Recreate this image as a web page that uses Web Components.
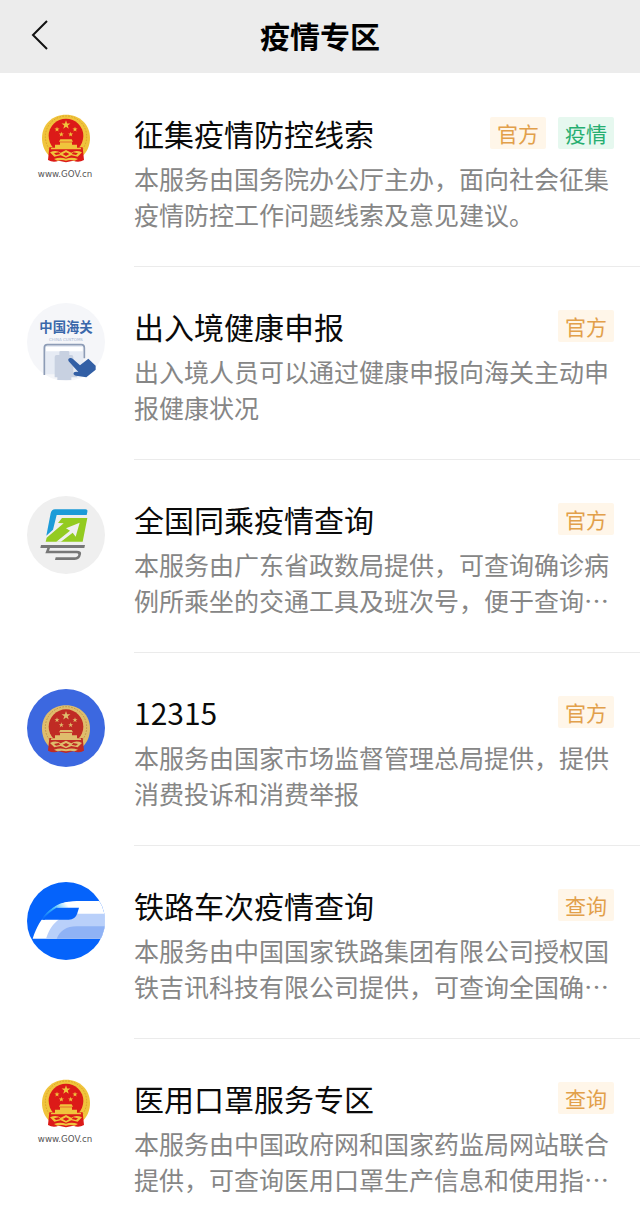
<!DOCTYPE html>
<html lang="zh-CN">
<head>
<meta charset="utf-8">
<meta name="viewport" content="width=device-width, initial-scale=1">
<title>疫情专区</title>
<style>
  :root {
    --main-font: "Noto Sans CJK SC", sans-serif;
    --bar-color: #ececec;
    --line-color: #ebebeb;
    --title-color: #0a0a0a;
    --desc-color: #868686;
  }
  body {
    margin: 0;
    background-color: #fff;
    font-family: var(--main-font);
  }
</style>
</head>
<body>
<service-page>
  <nav-bar slot="header">疫情专区</nav-bar>

  <service-item>
    <service-icon slot="icon" name="gov"></service-icon>
    <span slot="title">征集疫情防控线索</span>
    <service-tag slot="tags">官方</service-tag>
    <service-tag slot="tags" type="green">疫情</service-tag>
    本服务由国务院办公厅主办，面向社会征集疫情防控工作问题线索及意见建议。
  </service-item>

  <service-item>
    <service-icon slot="icon" name="customs"></service-icon>
    <span slot="title">出入境健康申报</span>
    <service-tag slot="tags">官方</service-tag>
    出入境人员可以通过健康申报向海关主动申报健康状况
  </service-item>

  <service-item>
    <service-icon slot="icon" name="travel"></service-icon>
    <span slot="title">全国同乘疫情查询</span>
    <service-tag slot="tags">官方</service-tag>
    本服务由广东省政数局提供，可查询确诊病例所乘坐的交通工具及班次号，便于查询…
  </service-item>

  <service-item>
    <service-icon slot="icon" name="market"></service-icon>
    <span slot="title">12315</span>
    <service-tag slot="tags">官方</service-tag>
    本服务由国家市场监督管理总局提供，提供消费投诉和消费举报
  </service-item>

  <service-item>
    <service-icon slot="icon" name="railway"></service-icon>
    <span slot="title">铁路车次疫情查询</span>
    <service-tag slot="tags">查询</service-tag>
    本服务由中国国家铁路集团有限公司授权国铁吉讯科技有限公司提供，可查询全国确…
  </service-item>

  <service-item last>
    <service-icon slot="icon" name="gov"></service-icon>
    <span slot="title">医用口罩服务专区</span>
    <service-tag slot="tags">查询</service-tag>
    本服务由中国政府网和国家药监局网站联合提供，可查询医用口罩生产信息和使用指…
  </service-item>
</service-page>

<script>
"use strict";

// five-pointed star centred on cx, cy
function star(cx, cy, r) {
  const points = [];
  for (let i = 0; i < 10; i++) {
    const radius = i % 2 ? r * 0.4 : r;
    const angle = (Math.PI / 5) * i - Math.PI / 2;
    points.push(
      `${(cx + radius * Math.cos(angle)).toFixed(1)},${(cy + radius * Math.sin(angle)).toFixed(1)}`
    );
  }
  return `<polygon points="${points.join(" ")}"/>`;
}

// national emblem, drawn around 0,0
function emblem(gold, goldDark, red) {
  return `
    <path fill="${gold}" d="M0-68C42-68 72-38 72 2C72 24 64 43 49 57H-49C-64 43-72 24-72 2C-72-38-42-68 0-68Z"/>
    <circle cy="-2" r="62" fill="none" stroke="${goldDark}" stroke-width="2" stroke-dasharray="5 4"/>
    <circle cy="-4" r="52" fill="${red}"/>
    <path fill="${red}" d="M-50 30L-54 68Q-38 77-22 70L0 75L22 70Q38 77 54 68L50 30Z"/>
    <g fill="${gold}">
      ${star(0, -37, 14)}${star(-27, -24, 8)}${star(27, -24, 8)}${star(-14, -9, 8)}${star(14, -9, 8)}
      <path d="M-17 6H17L21 13H-21ZM-18 15H18V22H-18ZM-33 22H33V32H-33ZM-44 31H44L46 36H-46Z"/>
      <path d="M-48 45Q-30 36-16 46L0 38L16 46Q30 36 48 45L35 58L16 54L0 61L-16 54L-35 58Z"/>
      <path d="M-36 65Q-18 58 0 64Q18 58 36 65L26 70Q12 66 0 70Q-12 66-26 70Z"/>
    </g>
    <g fill="${red}">
      <path d="M-10 50L0 45L10 50L0 56Z"/>
      <path d="M-36 48L-22 45L-17 50L-30 53ZM36 48L22 45L17 50L30 53Z"/>
    </g>`;
}

const icons = {
  gov: `
    <svg viewBox="21 30 234 234" aria-hidden="true">
      <g transform="translate(138 112)">${emblem("#f0c43c", "#cf9420", "#dc1a18")}</g>
      <text x="135" y="230" text-anchor="middle" font-family="DejaVu Sans, sans-serif" font-size="26" fill="#555">www.GOV.cn</text>
    </svg>`,
  customs: `
    <svg viewBox="21 24 234 234" aria-hidden="true">
      <circle cx="138" cy="141" r="117" fill="#f5f6f9"/>
      <text x="138" y="110" text-anchor="middle" font-size="40" font-weight="700" fill="#3a68aa">中国海关</text>
      <text x="138" y="138" text-anchor="middle" font-family="DejaVu Sans, sans-serif" font-size="12" fill="#a9b8d2">CHINA CUSTOMS</text>
      <path fill="#e6ebf4" d="M74 152H190V238H74Z"/>
      <path fill="none" stroke="#8d9cb6" stroke-width="5" d="M73 240V158Q73 149 82 149H184Q193 149 193 158V190"/>
      <path fill="#fff" d="M78 156H188V169H78Z"/>
      <path fill="#c8d1e1" d="M118 180V172Q118 168 122 168H144Q148 168 148 172V180H154Q160 180 160 186V238H172V247H154V255H112V247H104V186Q104 180 110 180Z"/>
      <path fill="#325fa5" d="M146 199Q142 191 150 189Q155 188 159 192L180 211L205 191L227 212V224L199 247L168 242Q158 239 161 233Q164 229 175 231Z"/>
    </svg>`,
  travel: `
    <svg viewBox="21 18 234 234" aria-hidden="true">
      <circle cx="138" cy="135" r="117" fill="#efefef"/>
      <path fill="#1c9bd8" d="M105 58H196Q204 58 202 66L200 75H110L99 119L79 137L92 70Q95 58 105 58Z"/>
      <path fill="#93cb20" d="M126 84H202L188 155H77L80 143L131 100L114 99Z"/>
      <path fill="#efefef" d="M179 98L167 140L158 128L123 155H109L150 122L138 115Z"/>
      <path fill="#777" d="M63 165H195L193 174H90L87 182H170Q186 182 183 193Q180 210 164 210H105L107 202H161Q173 202 175 194Q176 190 169 190H76L82 174H61Z"/>
    </svg>`,
  market: `
    <svg viewBox="21 30 234 234" aria-hidden="true">
      <circle cx="138" cy="147" r="117" fill="#3c68e0"/>
      <g transform="translate(138 147)">${emblem("#dfbd6c", "#b08338", "#c02b24")}</g>
    </svg>`,
  railway: `
    <svg viewBox="21 22 234 234" aria-hidden="true">
      <defs>
        <clipPath id="disc"><circle cx="138" cy="139" r="117"/></clipPath>
        <linearGradient id="nose" gradientUnits="userSpaceOnUse" x1="68" y1="136" x2="138" y2="84">
          <stop offset="0" stop-color="#0563fb"/>
          <stop offset=".5" stop-color="#35b7fa"/>
          <stop offset="1" stop-color="#fff"/>
        </linearGradient>
      </defs>
      <g clip-path="url(#disc)">
        <path fill="#0563fb" d="M21 22H255V256H21Z"/>
        <path fill="#fff" d="M38 192C58 125 105 79 170 79H255V192Z"/>
        <path fill="#b9d0fa" d="M78 192C91 150 120 118 170 117H255V192Z"/>
        <path fill="#8fb2f5" d="M110 192C120 168 139 155 170 155H255V192Z"/>
        <path fill="url(#nose)" d="M63 135C84 105 113 84 145 81V99H113Q90 109 74 135Z"/>
        <path fill="#0563fb" d="M109 99H177L172 116Q166 135 146 135H68Q85 113 109 99Z"/>
      </g>
    </svg>`,
};

class ServicePage extends HTMLElement {
  constructor() {
    super();
    this.attachShadow({ mode: "open" }).innerHTML = `
    <style>
      :host {
        display: block;
      }
      main {
        padding-top: 1px;
      }
    </style>
    <slot name="header"></slot>
    <main><slot></slot></main>
    `;
  }
}

class NavBar extends HTMLElement {
  constructor() {
    super();
    this.attachShadow({ mode: "open" }).innerHTML = `
    <style>
      :host {
        display: block;
        background-color: var(--bar-color);
      }
      header {
        display: grid;
        grid-template-columns: 80px 1fr 80px;
        align-items: center;
        height: 69px;
        padding-bottom: 4px;
      }
      button {
        display: flex;
        align-items: center;
        height: 100%;
        padding: 0 0 0 30px;
        border: 0;
        background: none;
        cursor: pointer;
      }
      svg {
        width: 20px;
        height: 32px;
      }
      h1 {
        margin: 0;
        color: #000;
        font-size: 30px;
        line-height: 44px;
        font-weight: 700;
        text-align: center;
      }
    </style>
    <header>
      <button type="button" aria-label="返回">
        <svg viewBox="0 0 20 32" fill="none" stroke="#111" stroke-width="2">
          <path d="M17 2L3 16L17 30"/>
        </svg>
      </button>
      <h1><slot></slot></h1>
    </header>
    `;
  }
}

class ServiceItem extends HTMLElement {
  constructor() {
    super();
    this.attachShadow({ mode: "open" }).innerHTML = `
    <style>
      :host {
        display: block;
      }
      a {
        display: flex;
        gap: 29px;
        padding-left: 27px;
        color: inherit;
        text-decoration: none;
      }
      .icon {
        flex: none;
        padding-top: 36px;
      }
      .body {
        flex: 1;
        min-width: 0;
        padding: 38px 26px 34px 0;
        border-bottom: 1px solid var(--line-color);
      }
      :host([last]) .body {
        padding-bottom: 20px;
        border-bottom: 0;
      }
      .head {
        display: flex;
        align-items: center;
        gap: 12px;
      }
      h2 {
        flex: 1;
        margin: 0;
        color: var(--title-color);
        font-size: 30px;
        line-height: 42px;
        font-weight: 400;
      }
      p {
        margin: 6px 0 0;
        color: var(--desc-color);
        font-size: 25px;
        line-height: 36px;
      }
    </style>
    <a href="#">
      <div class="icon"><slot name="icon"></slot></div>
      <div class="body">
        <div class="head">
          <h2><slot name="title"></slot></h2>
          <slot name="tags"></slot>
        </div>
        <p><slot></slot></p>
      </div>
    </a>
    `;
  }
}

class ServiceTag extends HTMLElement {
  constructor() {
    super();
    this.attachShadow({ mode: "open" }).innerHTML = `
    <style>
      :host {
        display: block;
        padding: 0 7px;
        border-radius: 2px;
        background-color: #fff6e9;
        color: #e2a04a;
        font-size: 21px;
        line-height: 32px;
      }
      :host([type="green"]) {
        background-color: #e6f8ef;
        color: #25ae70;
      }
    </style>
    <slot></slot>
    `;
  }
}

class ServiceIcon extends HTMLElement {
  constructor() {
    super();
    this.attachShadow({ mode: "open" });
  }

  connectedCallback() {
    this.shadowRoot.innerHTML = `
    <style>
      :host {
        display: block;
        width: 78px;
        height: 78px;
      }
      svg {
        display: block;
        width: 100%;
        height: 100%;
      }
    </style>
    ${icons[this.getAttribute("name")] || ""}
    `;
  }
}

customElements.define("service-page", ServicePage);
customElements.define("nav-bar", NavBar);
customElements.define("service-item", ServiceItem);
customElements.define("service-tag", ServiceTag);
customElements.define("service-icon", ServiceIcon);
</script>
</body>
</html>
